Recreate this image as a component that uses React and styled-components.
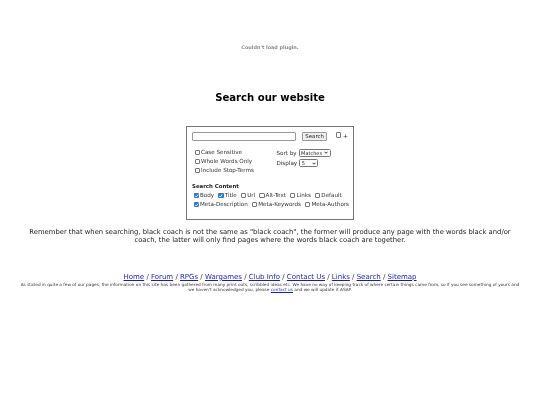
import React from 'react';
import styled, { createGlobalStyle } from 'styled-components';

const GlobalStyle = createGlobalStyle`
  html, body {
    margin: 0;
    padding: 0;
    background: #fff;
  }
  body {
    font-family: "DejaVu Sans", Verdana, sans-serif;
    color: #111;
  }
`;

const Page = styled.div`
  width: 540px;
  height: 405px;
  overflow: hidden;
  display: flex;
  flex-direction: column;
  align-items: center;
  text-align: center;
  padding-top: 44px;
  box-sizing: border-box;
  filter: blur(0.25px);
`;

const PluginNote = styled.div`
  font-size: 4.9px;
  line-height: 6px;
  font-weight: 700;
  color: #8a8a8a;
`;

const Heading = styled.h1`
  margin: 41px 0 0;
  font-size: 10.1px;
  line-height: 13px;
  font-weight: 700;
  color: #000;
`;

const SearchBox = styled.form`
  width: 168px;
  height: 94px;
  margin-top: 22px;
  box-sizing: border-box;
  border: 1px solid #777;
  padding: 4px 5px 0;
  text-align: left;
  font-size: 5.6px;
  color: #333;
`;

const QueryRow = styled.div`
  display: flex;
  align-items: center;
  height: 10px;
`;

const QueryInput = styled.div`
  width: 105px;
  height: 9px;
  box-sizing: border-box;
  border: 1px solid #999;
  border-radius: 1px;
  background: #fff;
`;

const SearchButton = styled.button`
  width: 25px;
  height: 9px;
  margin-left: 6.5px;
  padding: 0;
  box-sizing: border-box;
  border: 1px solid #999;
  border-radius: 1px;
  background: #efefef;
  color: #222;
  font-family: inherit;
  font-size: 5.4px;
  line-height: 7px;
`;

const TickBox = styled.span`
  display: inline-flex;
  flex: none;
  width: 5.5px;
  height: 5.5px;
  box-sizing: border-box;
  border-radius: 1px;
  border: ${(p) => (p.$on ? '0' : '0.6px solid #777')};
  background: ${(p) => (p.$on ? '#2f78d8' : '#fff')};
`;

const Plus = styled.span`
  display: flex;
  align-items: center;
  gap: 1.5px;
  margin-left: 9px;
  margin-top: -2px;
  font-size: 6px;
`;

const Options = styled.div`
  display: flex;
  margin-top: 8px;
  padding-left: 2.5px;
`;

const OptionColumn = styled.div`
  width: 82px;
  display: flex;
  flex-direction: column;
  gap: 1.6px;
`;

const SortColumn = styled.div`
  display: flex;
  flex-direction: column;
  gap: 2.5px;
  margin-top: -0.5px;
`;

const Option = styled.label`
  display: flex;
  align-items: center;
  gap: 1px;
  height: 7.4px;
  line-height: 7px;
  white-space: nowrap;
`;

const SortRow = styled.div`
  display: flex;
  align-items: center;
  gap: 2px;
  height: 8px;
  white-space: nowrap;
`;

const FakeSelect = styled.span`
  display: inline-flex;
  align-items: center;
  justify-content: space-between;
  width: ${(p) => p.$width}px;
  height: 8px;
  box-sizing: border-box;
  padding: 0 1.5px;
  border: 0.7px solid #777;
  border-radius: 1.5px;
  font-size: 5px;
  color: #222;
`;

const SectionTitle = styled.div`
  margin-top: 9px;
  font-size: 5.4px;
  line-height: 7px;
  font-weight: 700;
  color: #222;
`;

const ContentRow = styled.div`
  display: flex;
  gap: ${(p) => p.$gap}px;
  margin: 1.5px 0 0 1.5px;
`;

const Note = styled.p`
  width: 490px;
  margin: 8px 0 0;
  font-size: 6.8px;
  line-height: 8.4px;
  color: #222;
`;

const Nav = styled.nav`
  margin-top: 28px;
  font-size: 7px;
  line-height: 9px;
  color: #333;
`;

const NavLink = styled.a`
  color: #1a1acc;
  text-decoration: underline;
`;

const Disclaimer = styled.p`
  width: 503px;
  margin: 0;
  font-size: 4.26px;
  line-height: 5px;
  color: #333;

  a {
    color: #1a1acc;
    text-decoration: underline;
  }
`;

const Chevron = () => (
  <svg width="4" height="3" viewBox="0 0 8 6" fill="none">
    <path d="M1 1.5 4 4.5 7 1.5" stroke="#222" strokeWidth="1.8" />
  </svg>
);

const Tick = ({ on }) => (
  <TickBox $on={on}>
    {on && (
      <svg width="5.5" height="5.5" viewBox="0 0 11 11" fill="none">
        <path d="M2.5 5.8 4.6 8 8.6 3" stroke="#fff" strokeWidth="1.8" />
      </svg>
    )}
  </TickBox>
);

const Check = ({ on, label }) => (
  <Option>
    <Tick on={on} />
    {label}
  </Option>
);

const navItems = ['Home', 'Forum', 'RPGs', 'Wargames', 'Club Info', 'Contact Us', 'Links', 'Search', 'Sitemap'];

const App = () => (
  <Page>
    <GlobalStyle />
    <PluginNote>Couldn't load plugin.</PluginNote>
    <Heading>Search our website</Heading>
    <SearchBox>
      <QueryRow>
        <QueryInput />
        <SearchButton type="button">Search</SearchButton>
        <Plus>
          <Tick />+
        </Plus>
      </QueryRow>
      <Options>
        <OptionColumn>
          <Check label="Case Sensitive" />
          <Check label="Whole Words Only" />
          <Check label="Include Stop-Terms" />
        </OptionColumn>
        <SortColumn>
          <SortRow>
            Sort by
            <FakeSelect $width={32}>Matches<Chevron /></FakeSelect>
          </SortRow>
          <SortRow>
            Display
            <FakeSelect $width={19}>5<Chevron /></FakeSelect>
          </SortRow>
        </SortColumn>
      </Options>
      <SectionTitle>Search Content</SectionTitle>
      <ContentRow $gap={4}>
        <Check on label="Body" />
        <Check on label="Title" />
        <Check label="Url" />
        <Check label="Alt-Text" />
        <Check label="Links" />
        <Check label="Default" />
      </ContentRow>
      <ContentRow $gap={4}>
        <Check on label="Meta-Description" />
        <Check label="Meta-Keywords" />
        <Check label="Meta-Authors" />
      </ContentRow>
    </SearchBox>
    <Note>
      Remember that when searching, black coach is not the same as "black coach", the former will produce any page
      with the words black and/or coach, the latter will only find pages where the words black coach are together.
    </Note>
    <Nav>
      {navItems.map((item, i) => (
        <React.Fragment key={item}>
          {i > 0 && ' / '}
          <NavLink href="#">{item}</NavLink>
        </React.Fragment>
      ))}
    </Nav>
    <Disclaimer>
      As stated in quite a few of our pages, the information on this site has been gathered from many print outs,
      scribbled ideas etc. We have no way of keeping track of where certain things came from, so if you see something
      of yours and we haven't acknowledged you, please <a href="#">contact us</a> and we will update it ASAP.
    </Disclaimer>
  </Page>
);

export default App;
